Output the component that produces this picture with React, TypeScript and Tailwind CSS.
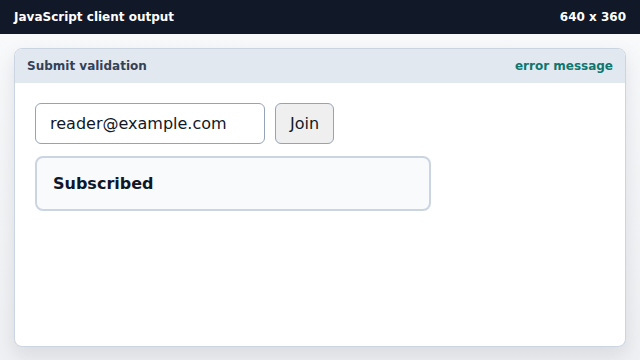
import { useState } from 'react';

// Submit validation demo — static capture of the client output frame.

export default function App() {
  const [email, setEmail] = useState('reader@example.com');

  return (
    <div className="w-[640px] h-[360px] flex flex-col bg-[#f1f3f6] font-['DejaVu_Sans',sans-serif] overflow-hidden">
      {/* Top bar */}
      <div className="h-[34px] shrink-0 bg-[#111827] flex items-center justify-between px-[14px] text-white text-[12px] font-bold">
        <span>JavaScript client output</span>
        <span>640 x 360</span>
      </div>

      {/* Stage */}
      <div className="flex-1 bg-gradient-to-b from-[#f8f9fb] to-[#eef0f3] px-[14px] pt-[14px] pb-[13px] flex">
        <div className="flex-1 flex flex-col bg-white border border-[#cbd5e1] rounded-[8px] overflow-hidden shadow-[0_8px_20px_rgba(15,23,42,0.10)]">
          <div className="h-[34px] shrink-0 bg-[#e2e8f0] flex items-center justify-between px-[12px] text-[12px] font-bold">
            <span className="text-[#334155]">Submit validation</span>
            <span className="text-[#0f766e]">error message</span>
          </div>

          <div className="flex-1 px-[20px] pt-[20px] flex flex-col gap-[12px]">
            <form onSubmit={e => e.preventDefault()} className="flex gap-[10px]">
              <input
                value={email}
                onChange={e => setEmail(e.target.value)}
                className="w-[230px] h-[41px] px-[14px] border border-[#94a3b8] rounded-[6px] text-[16px] text-[#111827] outline-none bg-white"
              />
              <button type="submit"
                className="w-[59px] h-[41px] bg-[#efefef] border border-[#94a3b8] rounded-[6px] text-[16px] text-[#111827]">
                Join
              </button>
            </form>

            <div className="w-[396px] h-[55px] bg-[#f8fafc] border-2 border-[#cbd5e1] rounded-[8px] flex items-center px-[16px] text-[16px] font-bold text-[#0f172a]">
              Subscribed
            </div>
          </div>
        </div>
      </div>
    </div>
  );
}
